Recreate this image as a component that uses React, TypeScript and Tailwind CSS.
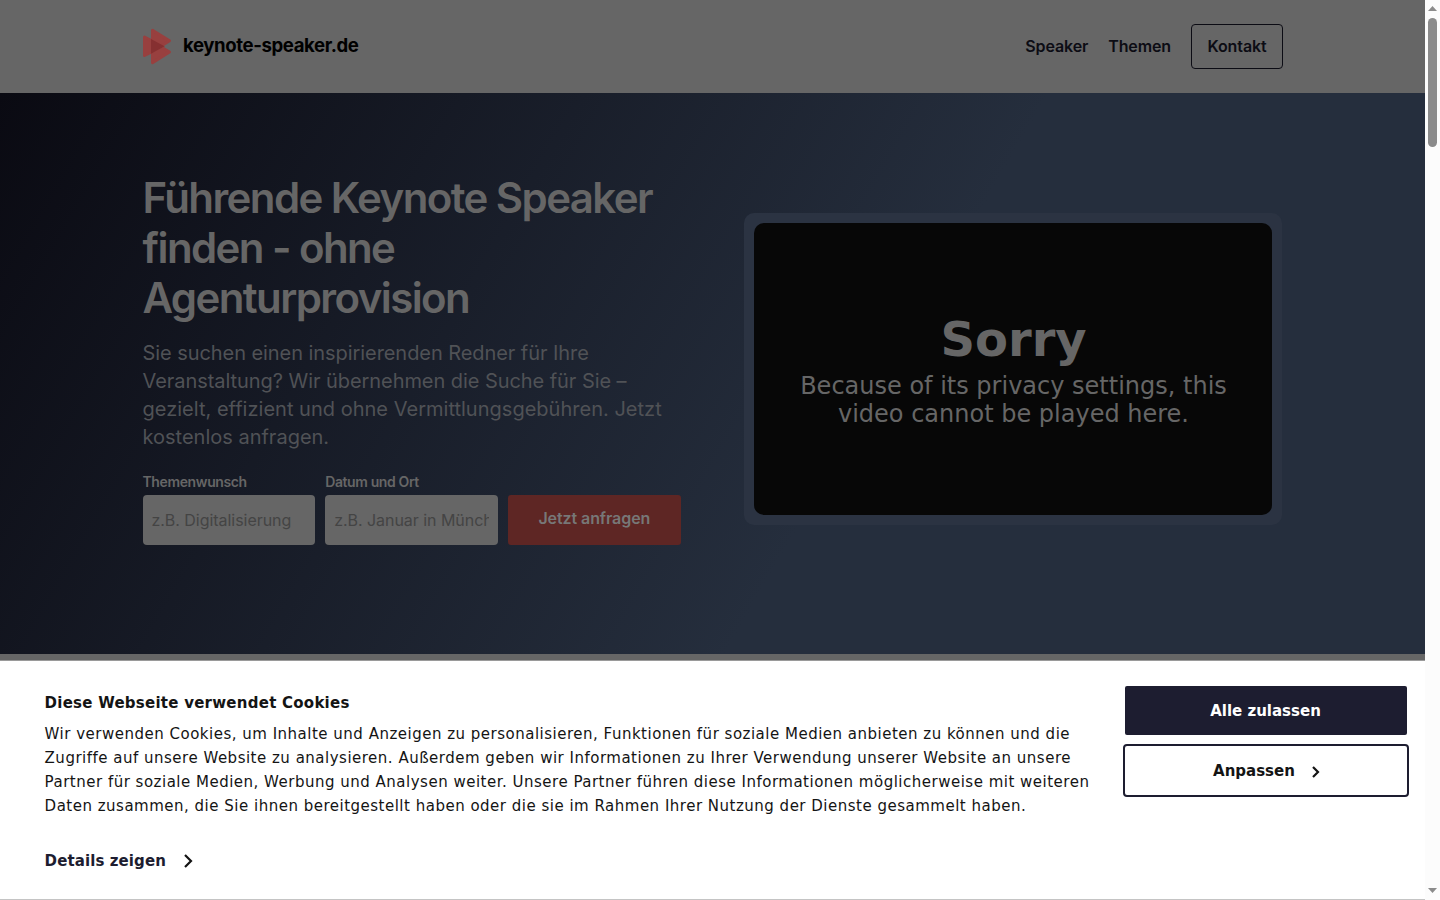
import React from "react";

const ink = "text-[#141414]";

function Logo() {
  return (
    <div className="flex items-center gap-[11px]">
      <svg width="29" height="37" viewBox="0 0 29 37" className="shrink-0">
        <g fill="#98403f" stroke="#98403f" strokeWidth="3" strokeLinejoin="round">
          <path d="M1.5 9 L20 18.5 L1.5 27.5 Z" />
          <path d="M9.5 2.2 L26.5 12.7 L9.5 23.5 Z" />
          <path d="M9.5 14 L26.5 24 L9.5 34.7 Z" />
        </g>
        <path d="M8 11 L21.5 18.3 L8 25.7 Z" fill="#863031" />
      </svg>
      <span className="pb-[3px] text-[18.6px] leading-7 font-bold tracking-[-0.4px] whitespace-nowrap text-black">
        keynote-speaker.de
      </span>
    </div>
  );
}

function Header() {
  return (
    <header className="flex h-[93px] shrink-0 items-center justify-between bg-[#666666] pr-[142px] pl-[143px] text-[#0c0c14]">
      <Logo />
      <nav className="flex items-center gap-5 text-base font-semibold tracking-[-0.12px]">
        <a className="pb-[2px]">Speaker</a>
        <a className="pb-[2px]">Themen</a>
        <a className="flex h-[45px] w-[92px] items-center justify-center rounded-[4px] border border-[#0c0c14] pb-[2px]">Kontakt</a>
      </nav>
    </header>
  );
}

function Field({ label, hint }: { label: string; hint: string }) {
  return (
    <label className="flex w-[172.67px] flex-col">
      <span className="h-[22px] text-sm leading-[18px] font-semibold tracking-[-0.38px] text-[#666666]">{label}</span>
      <span className="flex h-[50px] items-center rounded-[4px] bg-[#666666] px-[9px]">
        <span className="w-full overflow-hidden text-base tracking-[-0.04px] whitespace-nowrap text-[#444444]">{hint}</span>
      </span>
    </label>
  );
}

function Hero() {
  return (
    <section className="flex h-[561px] shrink-0 bg-[linear-gradient(120deg,#0a0a12_0%,#252e3d_60%)] pl-[142.5px]">
      <div className="w-[540px] pt-20 text-[#666666]">
        <h1 className="text-[42px] leading-[50px] font-semibold tracking-[-1.59px]">
          Führende Keynote Speaker
          <br />
          finden - ohne
          <br />
          Agenturprovision
        </h1>
        <p className="mt-4 text-xl leading-7 whitespace-nowrap text-[#505256]">
          <span className="tracking-[-0.065px]">Sie suchen einen inspirierenden Redner für Ihre</span>
          <br />
          <span className="tracking-[-0.06px]">Veranstaltung? Wir übernehmen die Suche für Sie –</span>
          <br />
          <span className="tracking-[0.015px]">gezielt, effizient und ohne Vermittlungsgebühren. Jetzt</span>
          <br />
          kostenlos anfragen.
        </p>
        <div className="mt-[22px] flex items-end gap-[10px]">
          <Field label="Themenwunsch" hint="z.B. Digitalisierung" />
          <Field label="Datum und Ort" hint="z.B. Januar in München" />
          <div className="flex h-[50px] w-[173px] items-center justify-center rounded-[3px] bg-[#5e2624] pb-1 text-base font-semibold tracking-[-0.08px] text-[#777]">
            Jetzt anfragen
          </div>
        </div>
      </div>
      <div className="mt-[120px] ml-[61.5px] h-[312px] w-[538px] rounded-[10px] bg-[#2b3342] p-[10px]">
        <div className="flex h-[292px] flex-col items-center rounded-[10px] bg-[#070707] pt-[88px] pl-px text-center font-['DejaVu_Sans',sans-serif] text-[#666666]">
          <h2 className="text-5xl leading-[56px] font-bold">Sorry</h2>
          <p className="mt-[5px] text-2xl leading-7">
            Because of its privacy settings, this
            <br />
            video cannot be played here.
          </p>
        </div>
      </div>
    </section>
  );
}

function CookieBanner() {
  return (
    <section className={`flex h-[238px] shrink-0 bg-white pl-[44.6px] font-['DejaVu_Sans',sans-serif] text-[15px] ${ink}`}>
      <div className="w-[1078.4px] pt-[30px]">
        <h2 className="leading-6 font-bold tracking-[0.25px]">Diese Webseite verwendet Cookies</h2>
        <p className="mt-[7px] leading-6 tracking-[0.5px] whitespace-nowrap">
          Wir verwenden Cookies, um Inhalte und Anzeigen zu personalisieren, Funktionen für soziale Medien anbieten zu können und die
          <br />
          Zugriffe auf unsere Website zu analysieren. Außerdem geben wir Informationen zu Ihrer Verwendung unserer Website an unsere
          <br />
          Partner für soziale Medien, Werbung und Analysen weiter. Unsere Partner führen diese Informationen möglicherweise mit weiteren
          <br />
          Daten zusammen, die Sie ihnen bereitgestellt haben oder die sie im Rahmen Ihrer Nutzung der Dienste gesammelt haben.
        </p>
        <div className="mt-[31px] flex items-center gap-[18px] text-[#1d1d30]">
          <span className="leading-6 font-bold tracking-[0.1px]">Details zeigen</span>
          <svg width="9" height="14" viewBox="0 0 9 14" fill="none" stroke="#141414" strokeWidth="2.2">
            <path d="M1 1 L7 7 L1 13" />
          </svg>
        </div>
      </div>
      <div className="flex w-[286px] flex-col items-center pt-[25px] font-bold">
        <button className="h-[49px] w-[282px] rounded-[2px] bg-[#1d1d30] pt-px pr-px text-white">Alle zulassen</button>
        <button className="mt-[9px] flex h-[53px] w-[286px] items-center justify-center gap-[17px] rounded-[4px] border-2 border-[#1d1d30] pt-[2px] pl-px">
          Anpassen
          <svg width="8" height="12" viewBox="0 0 8 12" fill="none" stroke="#141414" strokeWidth="2.2" className="mt-[1px]">
            <path d="M1 1 L6 6 L1 11" />
          </svg>
        </button>
      </div>
    </section>
  );
}

function Scrollbar() {
  return (
    <div className="flex h-full w-[15px] shrink-0 flex-col items-center bg-[#fcfcfc]">
      <svg width="15" height="18" viewBox="0 0 15 18">
        <path d="M3 11 L7.5 6 L12 11 Z" fill="#8b8b8b" />
      </svg>
      <div className="h-[129px] w-[9px] rounded-full bg-[#8b8b8b]" />
      <div className="flex-1" />
      <svg width="15" height="17" viewBox="0 0 15 17">
        <path d="M3 5 L7.5 10 L12 5 Z" fill="#8b8b8b" />
      </svg>
    </div>
  );
}

export default function App() {
  return (
    <div className="flex h-[900px] w-[1440px] overflow-hidden bg-white font-['Inter',sans-serif]">
      <main className="flex h-full w-[1425px] flex-col bg-[#c4c4c4]">
        <Header />
        <Hero />
        <div className="h-[7px] shrink-0 border-b border-[#9a9a9a] bg-[#666666]" />
        <CookieBanner />
      </main>
      <Scrollbar />
    </div>
  );
}
